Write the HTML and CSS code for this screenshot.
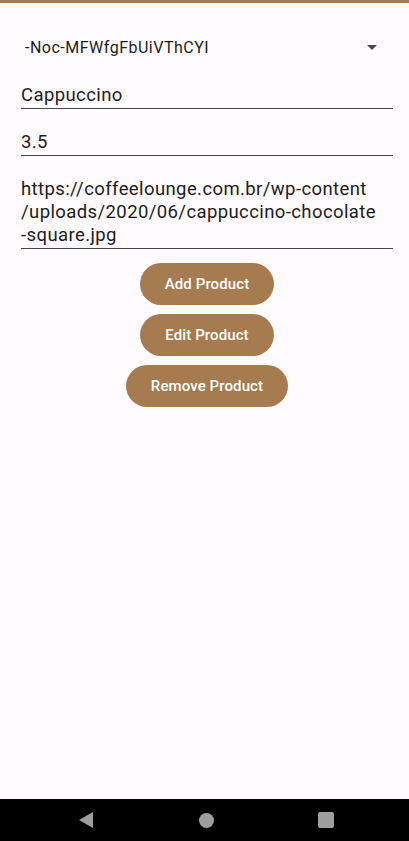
FILE: index.html
```html
<!DOCTYPE html>
<html>
<head>
<meta charset="utf-8">
<link rel="stylesheet" href="styles.css">
</head>
<body>
<div class="screen">
  <div class="topbar"></div>
  <main class="content">
    <div class="dropdown">
      <span class="dropdown-text">-Noc-MFWfgFbUiVThCYI</span>
      <svg class="dropdown-icon" width="24" height="24" viewBox="0 0 24 24"><path d="M7 10l5 5 5-5z" fill="#49454F"/></svg>
    </div>
    <div class="field field-first">Cappuccino</div>
    <div class="field">3.5</div>
    <div class="field">https://coffeelounge.com.br/wp-content<br>/uploads/2020/06/cappuccino-chocolate<br>-square.jpg</div>
    <div class="buttons">
      <button class="btn">Add Product</button>
      <button class="btn">Edit Product</button>
      <button class="btn">Remove Product</button>
    </div>
  </main>
  <nav class="navbar">
    <span class="nav-slot"><svg width="14" height="16" viewBox="0 0 14 16"><path d="M14 0V16L0 8Z" fill="#9E9E9E"/></svg></span>
    <span class="nav-slot"><span class="nav-home"></span></span>
    <span class="nav-slot"><span class="nav-recent"></span></span>
  </nav>
</div>
</body>
</html>
```
FILE: styles.css
```css
* { box-sizing: border-box; }
html, body { margin: 0; padding: 0; }
body {
  background: #FFFBFE;
  font-family: Roboto, "Noto Sans", sans-serif;
  color: #1C1B1F;
}
.screen {
  height: 841px;
  display: flex;
  flex-direction: column;
}
.topbar {
  height: 3px;
  background: #A67B50;
}
.content {
  flex: 1;
  padding: 0 16px 0 21px;
  display: flex;
  flex-direction: column;
}
.dropdown {
  margin-top: 32px;
  height: 24px;
  display: flex;
  align-items: center;
  justify-content: space-between;
  padding-left: 4px;
  padding-right: 9px;
}
.dropdown-text {
  font-size: 16px;
  line-height: 24px;
  letter-spacing: 0.5px;
  position: relative;
  top: 1px;
}
.dropdown-icon { display: block; }
.field {
  margin-top: 22px;
  font-size: 18.5px;
  line-height: 23px;
  letter-spacing: 0.4px;
  padding-bottom: 1px;
  border-bottom: 1px solid #49454F;
}
.field-first { margin-top: 25px; }
.buttons {
  margin-top: 14px;
  display: flex;
  flex-direction: column;
  align-items: center;
  gap: 9.5px;
}
.btn {
  height: 41.5px;
  padding: 0 25px;
  border: none;
  border-radius: 21px;
  background: #A67B50;
  color: #FFFFFF;
  font-family: Roboto, "Noto Sans", sans-serif;
  font-weight: 500;
  font-size: 15px;
  letter-spacing: 0.1px;
}
.navbar {
  height: 42px;
  background: #000000;
  display: flex;
  align-items: center;
  padding-left: 71px;
  gap: 90px;
}
.nav-slot {
  width: 30px;
  height: 16px;
  display: flex;
  align-items: center;
  justify-content: center;
}
.nav-slot svg { display: block; }
.nav-home {
  width: 15px;
  height: 15px;
  border-radius: 50%;
  background: #9E9E9E;
}
.nav-recent {
  width: 16px;
  height: 16px;
  border-radius: 2px;
  background: #9E9E9E;
}
```
